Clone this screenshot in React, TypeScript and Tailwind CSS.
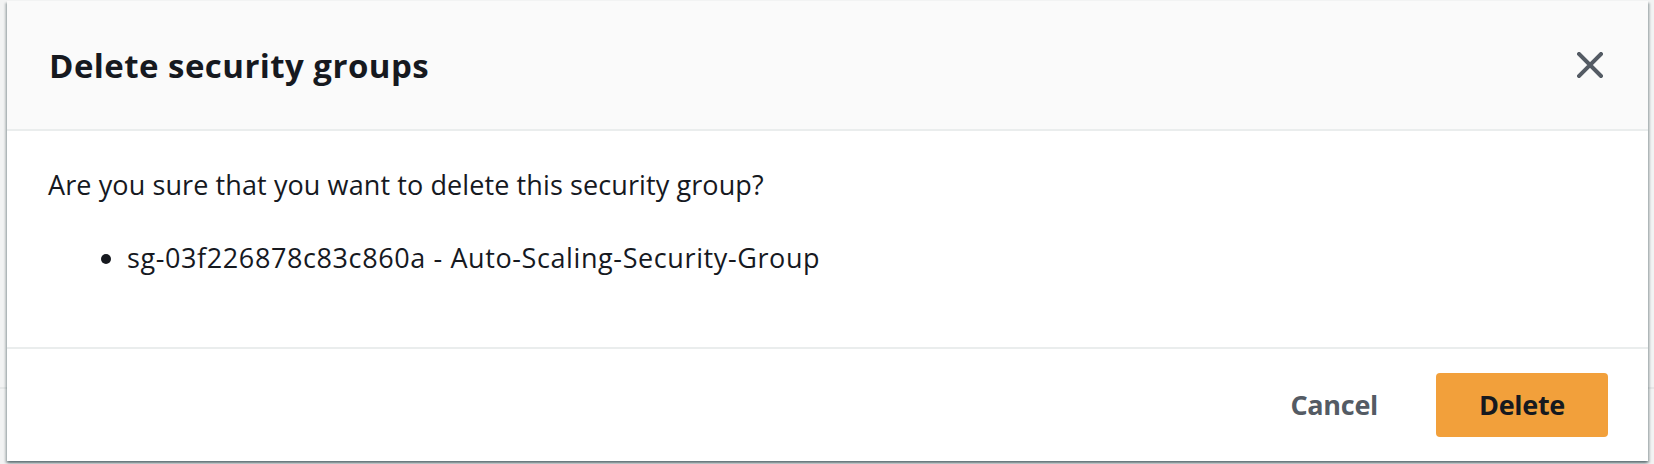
import React from "react";

function CloseIcon() {
  return (
    <svg width="26" height="26" viewBox="0 0 26 26" fill="none">
      <path d="M2 2L24 24M24 2L2 24" stroke="#545b64" strokeWidth="4" strokeLinecap="square" />
    </svg>
  );
}

export default function App() {
  return (
    <div
      className="relative w-[1654px] h-[464px] bg-[#f2f3f3] overflow-hidden"
      style={{ fontFamily: "'Open Sans', Roboto, sans-serif" }}
    >
      {/* page content behind the dialog */}
      <div className="absolute left-0 right-0 top-[387px] h-[2px] bg-[#e5e7e7]" />

      {/* dialog */}
      <div className="relative ml-[7px] mt-[1px] w-[1641px] h-[460px] bg-white flex flex-col shadow-[0_2px_2px_0_rgba(0,28,36,0.35),2px_2px_2px_0_rgba(0,28,36,0.2),-2px_2px_2px_0_rgba(0,28,36,0.2)]">
        <div className="h-[130px] shrink-0 bg-[#fafafa] border-b-2 border-[#eaeded] flex items-center justify-between pl-[42px] pr-[45px]">
          <h2 className="text-[33px] font-bold text-[#16191f] leading-none tracking-[0.45px]">Delete security groups</h2>
          <button className="flex items-center justify-center">
            <CloseIcon />
          </button>
        </div>

        <div className="h-[218px] shrink-0 border-b-2 border-[#eaeded] pl-[41px] pt-[34px] text-[27px] text-[#16191f] leading-[40px] tracking-[0.1px]">
          <p>Are you sure that you want to delete this security group?</p>
          <ul className="mt-[33px] pl-[79px] list-disc">
            <li className="tracking-[0.6px]">sg-03f226878c83c860a - Auto-Scaling-Security-Group</li>
          </ul>
        </div>

        <div className="flex-1 flex items-center justify-end pr-[40px] gap-[18px]">
          <button className="h-[64px] px-[40px] text-[27px] font-bold text-[#545b64] tracking-[-0.3px]">Cancel</button>
          <button className="h-[64px] w-[172px] rounded-[4px] bg-[#f2a03b] text-[27px] font-bold text-[#16191f] tracking-[-0.3px]">
            Delete
          </button>
        </div>
      </div>
    </div>
  );
}
